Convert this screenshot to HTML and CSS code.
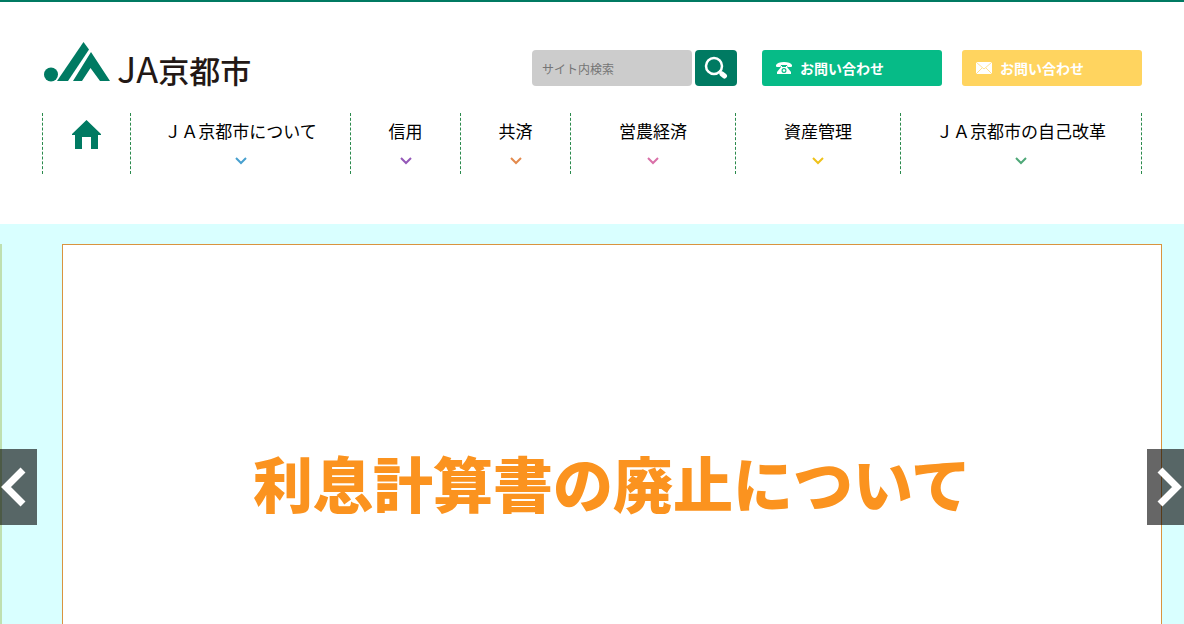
FILE: index.html
```html
<!DOCTYPE html>
<html lang="ja">
<head>
    <meta charset="UTF-8">
    <meta name="viewport" content="width=device-width, initial-scale=1.0">
    <title>JA京都市</title>
    <link rel="stylesheet" href="styles.css">
</head>
<body>
    <header class="header">
        <div class="container">
            <div class="header-top">
                <a class="logo" href="#">
                    <svg class="logo-mark" viewBox="0 0 68 42" aria-hidden="true">
                        <circle cx="8" cy="33.5" r="7"/>
                        <path d="M14 40 L40.5 1 L46 8.5 L25 40 Z"/>
                        <path d="M30 40 L48 11 L67 40 H57 L47.5 27 L39 40 Z"/>
                    </svg>
                    <span class="logo-text">JA<b>京都市</b></span>
                </a>
                <form class="search">
                    <input type="text" class="search-input" placeholder="サイト内検索" aria-label="サイト内検索">
                    <button type="submit" class="search-button" aria-label="検索">
                        <svg viewBox="0 0 24 24" aria-hidden="true">
                            <circle cx="10" cy="10" r="8" fill="none" stroke="#fff" stroke-width="2.5"/>
                            <path d="M15 15 L18 18" stroke="#fff" stroke-width="3"/>
                            <path d="M18 18 L20.5 20" stroke="#fff" stroke-width="5" stroke-linecap="round"/>
                        </svg>
                    </button>
                </form>
                <a class="contact contact-tel" href="#">
                    <svg viewBox="0 0 16 12" aria-hidden="true">
                        <path fill="#fff" fill-rule="evenodd" d="M0 4 V3 C1 1 4 0 8 0 S15 1 16 3 V4 Q16 5 15 5 H12 Q11 5 11 3 H5 Q5 5 4 5 H1 Q0 5 0 4 Z M5 4 H6 V5 H10 V4 H11 V5 L15 10 V12 H1 V10 L5 5 Z M8 6 A2.5 2.5 0 1 0 8 11 A2.5 2.5 0 1 0 8 6 Z"/>
                        <circle cx="8" cy="8.5" r="1.3" fill="#fff"/>
                    </svg>
                    お問い合わせ
                </a>
                <a class="contact contact-mail" href="#">
                    <svg viewBox="0 0 16 12" aria-hidden="true">
                        <path fill="#fff" d="M0 0 H16 V12 H0 Z"/>
                        <path d="M0 0 L8 7 L16 0 M0 12 L6 6 M16 12 L10 6" fill="none" stroke="#ffd45f" stroke-width="0.7"/>
                    </svg>
                    お問い合わせ
                </a>
            </div>
            <nav class="nav">
                <a class="nav-home" href="#" aria-label="ホーム">
                    <svg viewBox="0 0 29 29" aria-hidden="true">
                        <path d="M14.5 0 L29 14 V15 H26 V29 H19 V17 H10 V29 H3 V15 H0 V14 Z"/>
                    </svg>
                </a>
                <a class="nav-about" href="#">ＪＡ京都市について<svg class="chevron" viewBox="0 0 12 8" aria-hidden="true"><path d="M1 1 L6 6 L11 1"/></svg></a>
                <a class="nav-credit" href="#">信用<svg class="chevron" viewBox="0 0 12 8" aria-hidden="true"><path d="M1 1 L6 6 L11 1"/></svg></a>
                <a class="nav-insurance" href="#">共済<svg class="chevron" viewBox="0 0 12 8" aria-hidden="true"><path d="M1 1 L6 6 L11 1"/></svg></a>
                <a class="nav-farming" href="#">営農経済<svg class="chevron" viewBox="0 0 12 8" aria-hidden="true"><path d="M1 1 L6 6 L11 1"/></svg></a>
                <a class="nav-assets" href="#">資産管理<svg class="chevron" viewBox="0 0 12 8" aria-hidden="true"><path d="M1 1 L6 6 L11 1"/></svg></a>
                <a class="nav-reform" href="#">ＪＡ京都市の自己改革<svg class="chevron" viewBox="0 0 12 8" aria-hidden="true"><path d="M1 1 L6 6 L11 1"/></svg></a>
            </nav>
        </div>
    </header>

    <main class="slider">
        <div class="slide-previous"></div>
        <a class="slide" href="#">利息計算書の廃止について</a>
        <button type="button" class="arrow arrow-prev" aria-label="前へ">
            <svg viewBox="0 0 37 76" aria-hidden="true"><path d="M23 21 L6 38 L23 55"/></svg>
        </button>
        <button type="button" class="arrow arrow-next" aria-label="次へ">
            <svg viewBox="0 0 37 76" aria-hidden="true"><path d="M13 21 L30 38 L13 55"/></svg>
        </button>
    </main>
</body>
</html>
```
FILE: styles.css
```css
:root {
    --green: #007a62;
    --tel-color: #06bb87;
    --mail-color: #ffd45f;
    --slider-bg-color: #d9ffff;
    --title-color: #fb931f;
}

* {
    box-sizing: border-box;
}
body {
    margin: 0;
    font-family: "Noto Sans CJK JP", sans-serif;
    color: #000;
    background-color: #fff;
}
a {
    color: inherit;
    text-decoration: none;
}
.header {
    border-top: 2px solid var(--green);
    padding: 40px 0 50px;
}
.container {
    max-width: 1100px;
    margin: 0 auto;
}

/* Logo, search and contact buttons */
.header-top {
    display: flex;
    align-items: center;
    height: 52px;
    margin-bottom: 19px;
}
.logo {
    display: flex;
    align-items: flex-start;
    gap: 6px;
    margin-right: auto;
    padding-left: 1px;
    color: #231815;
}
.logo-mark {
    width: 68px;
    height: 42px;
    fill: var(--green);
}
.logo-text {
    font-size: 36px;
    line-height: 52px;
    font-weight: 400;
}
.logo-text b {
    font-size: 31px;
    font-weight: 500;
}
.search {
    display: flex;
    gap: 3px;
}
.search-input {
    width: 160px;
    height: 36px;
    padding: 0 10px;
    border: none;
    border-radius: 4px;
    background-color: #ccc;
    font-family: inherit;
    font-size: 12px;
}
.search-input::placeholder {
    color: #757575;
}
.search-button {
    display: flex;
    align-items: center;
    justify-content: center;
    width: 42px;
    height: 36px;
    padding: 0;
    border: none;
    border-radius: 4px;
    background-color: var(--green);
    cursor: pointer;
}
.search-button svg {
    width: 24px;
    height: 24px;
}
.contact {
    display: flex;
    align-items: center;
    gap: 8px;
    width: 180px;
    height: 36px;
    padding: 0 14px;
    border-radius: 3px;
    color: #fff;
    font-size: 14px;
    font-weight: 700;
}
.contact svg {
    width: 16px;
    height: 12px;
}
.contact-tel {
    margin-left: 25px;
    background-color: var(--tel-color);
}
.contact-mail {
    margin-left: 20px;
    background-color: var(--mail-color);
}

/* Global navigation */
.nav {
    display: grid;
    grid-template-columns: 8fr 20fr 10fr 10fr 15fr 15fr 22fr;
}
.nav a {
    display: flex;
    flex-direction: column;
    align-items: center;
    height: 61px;
    padding-top: 7px;
    border-left: 1px dashed #2a8a4c;
    font-size: 17px;
    line-height: 22px;
    white-space: nowrap;
}
.nav a:last-child {
    border-right: 1px dashed #2a8a4c;
}
.nav-home svg {
    width: 29px;
    height: 29px;
    fill: var(--green);
}
.chevron {
    width: 12px;
    height: 8px;
    margin-top: 15px;
    fill: none;
    stroke: currentColor;
    stroke-width: 2;
}
.nav-about .chevron { color: #48a0cf; }
.nav-credit .chevron { color: #9458b8; }
.nav-insurance .chevron { color: #e38a4d; }
.nav-farming .chevron { color: #d970a8; }
.nav-assets .chevron { color: #efc21a; }
.nav-reform .chevron { color: #4fa878; }

/* Main slider */
.slider {
    position: relative;
    display: flex;
    gap: 60px;
    padding: 20px 22px 20px 0;
    background-color: var(--slider-bg-color);
}
.slide-previous {
    width: 2px;
    background-color: #bfe0b0;
}
.slide {
    flex: 1;
    display: flex;
    align-items: center;
    justify-content: center;
    height: 486px;
    padding-bottom: 12px;
    border: 1px solid #d9943f;
    background-color: #fff;
    color: var(--title-color);
    font-size: 60px;
    font-weight: 900;
}
.arrow {
    position: absolute;
    top: 50%;
    transform: translateY(-50%);
    width: 37px;
    height: 76px;
    padding: 0;
    border: none;
    background-color: rgba(0, 0, 0, 0.6);
    cursor: pointer;
}
.arrow svg {
    display: block;
    fill: none;
    stroke: #fff;
    stroke-width: 7;
}
.arrow-prev {
    left: 0;
}
.arrow-next {
    right: 0;
}
```
